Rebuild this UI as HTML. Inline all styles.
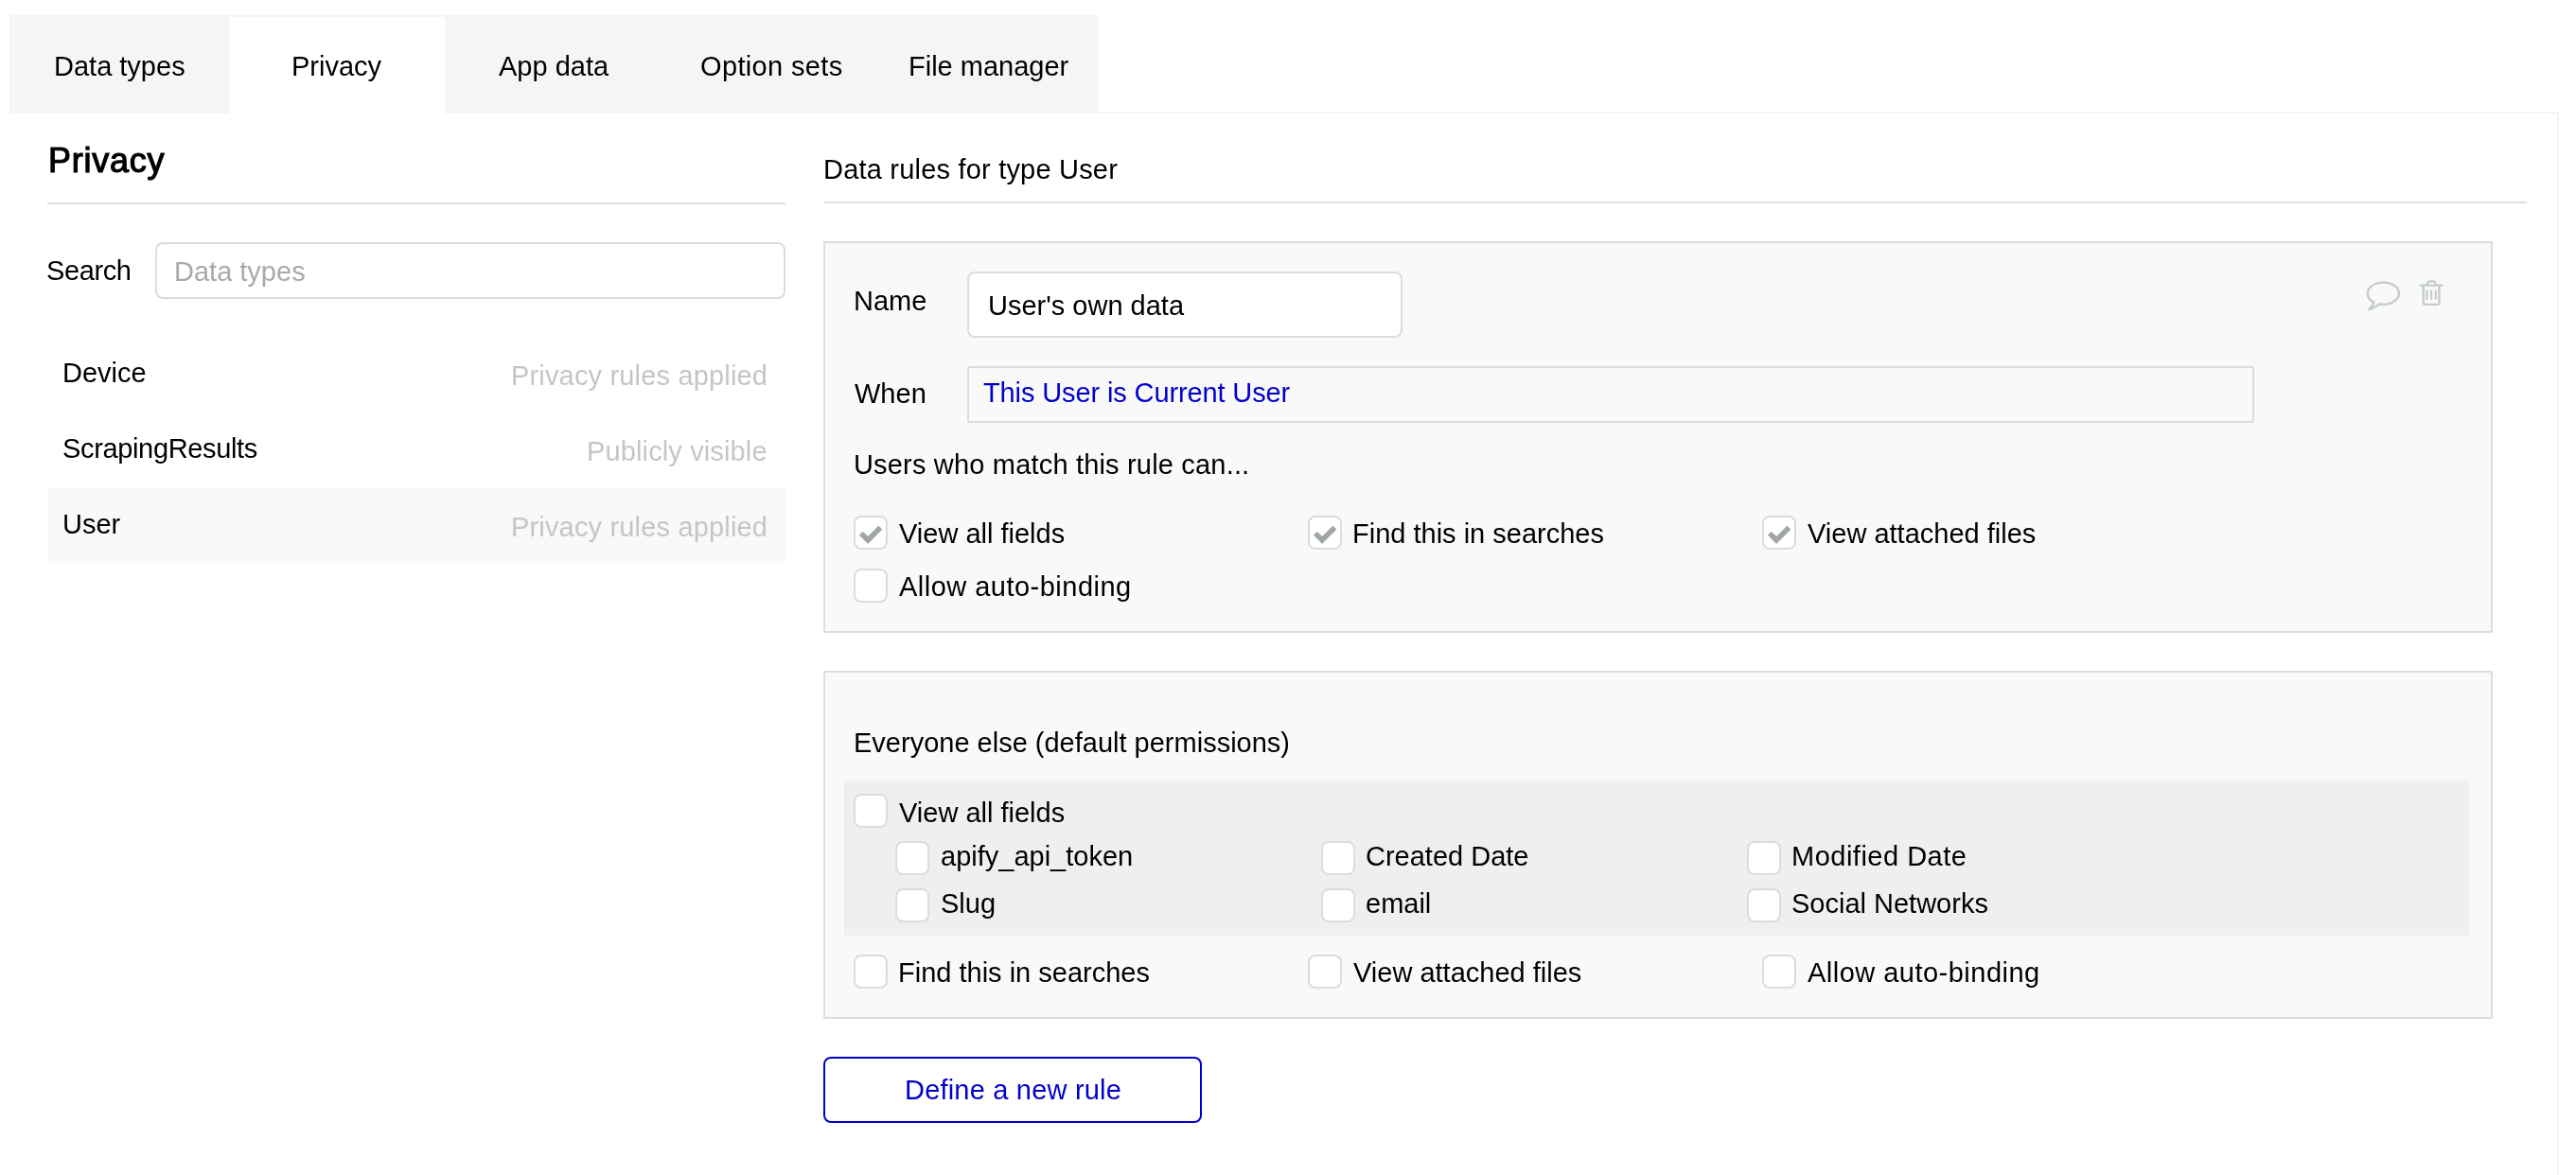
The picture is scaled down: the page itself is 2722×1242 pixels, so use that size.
<!DOCTYPE html>
<html>
<head>
<meta charset="utf-8">
<style>
html,body{margin:0;padding:0;}
body{width:2722px;height:1242px;overflow:hidden;background:#fff;position:relative;font-family:"Liberation Sans",sans-serif;color:#000;}
.a{position:absolute;}
.t{position:absolute;will-change:transform;font-size:29px;line-height:29px;white-space:nowrap;}
.tabbar{left:10px;top:16px;width:1150px;height:104px;background:#f5f5f5;}
.tab-active{left:242px;top:18px;width:228px;height:102px;background:#fff;}
.panel{left:1160px;top:118px;width:1542px;height:1200px;border-top:2px solid #f4f4f4;border-right:2px solid #f4f4f4;}
.hr{height:2px;background:#e0e0e0;}
.input{box-sizing:border-box;border:2px solid #dcdcdc;border-radius:8px;background:#fff;}
.box{box-sizing:border-box;border:2px solid #dddddd;background:#f9f9f9;}
.cb{box-sizing:border-box;width:36px;height:36px;border:2px solid #dcdcdc;border-radius:8px;background:#fff;}
.cb svg{position:absolute;left:-2px;top:-2px;}
.muted{color:#c5c5c5;}
.blue{color:#0000cc;}
</style>
</head>
<body>
<!-- tabs -->
<div class="a tabbar"></div>
<div class="a panel"></div>
<div class="a tab-active"></div>
<div class="t" id="t_dt" style="left:57px;top:56px;">Data types</div>
<div class="t" id="t_pr" style="left:308px;top:56px;">Privacy</div>
<div class="t" id="t_ad" style="left:527px;top:56px;">App data</div>
<div class="t" id="t_os" style="letter-spacing:0.35px;left:740px;top:56px;">Option sets</div>
<div class="t" id="t_fm" style="left:960px;top:56px;">File manager</div>

<!-- left column -->
<div class="t" id="h_priv" style="left:51px;top:152px;font-size:36px;line-height:36px;letter-spacing:0.75px;-webkit-text-stroke:1.2px #000;">Privacy</div>
<div class="a hr" style="left:50px;top:214px;width:780px;"></div>
<div class="t" id="search" style="letter-spacing:-0.4px;left:49px;top:272px;">Search</div>
<div class="a input" style="left:164px;top:256px;width:666px;height:60px;"></div>
<div class="t" id="ph" style="left:184px;top:273px;color:#a9a9a9;">Data types</div>

<div class="a" style="left:50px;top:516px;width:780px;height:80px;background:#f9f9f9;"></div>
<div class="t" id="dev" style="left:66px;top:380px;">Device</div>
<div class="t" id="scr" style="letter-spacing:-0.35px;left:66px;top:460px;">ScrapingResults</div>
<div class="t" id="usr" style="left:66px;top:540px;">User</div>
<div class="t muted" id="pra1" style="letter-spacing:0.17px;right:1911px;top:383px;">Privacy rules applied</div>
<div class="t muted" id="pv" style="letter-spacing:0.13px;right:1911px;top:463px;">Publicly visible</div>
<div class="t muted" id="pra2" style="letter-spacing:0.17px;right:1911px;top:543px;">Privacy rules applied</div>

<!-- right column -->
<div class="t" id="drt" style="letter-spacing:0.2px;left:870px;top:165px;">Data rules for type User</div>
<div class="a hr" style="left:870px;top:213px;width:1800px;"></div>

<!-- rule box 1 -->
<div class="a box" style="left:870px;top:255px;width:1764px;height:414px;"></div>
<div class="t" id="name" style="left:902px;top:304px;">Name</div>
<div class="a input" style="left:1022px;top:287px;width:460px;height:70px;"></div>
<div class="t" id="uod" style="left:1044px;top:309px;">User's own data</div>
<div class="t" id="when" style="left:903px;top:402px;">When</div>
<div class="a" style="box-sizing:border-box;left:1022px;top:387px;width:1360px;height:60px;border:2px solid #dcdcdc;border-radius:2px;background:#f9f9f9;"></div>
<div class="t blue" id="tuic" style="letter-spacing:-0.12px;left:1039px;top:401px;">This User is Current User</div>

<!-- icons -->
<svg class="a" style="left:2490px;top:285px;" width="110" height="50" viewBox="2490 285 110 50">
  <path d="M2508.6 319.6 A16.6 11.6 0 1 1 2514 321.4 C2511 323.8 2507.5 326.3 2503.2 327.3 C2505.5 325 2507.6 322 2508.6 319.3 Z" fill="none" stroke="#c4cccf" stroke-width="2.4" stroke-linejoin="round"/>
  <g fill="none" stroke="#c4cccf" stroke-width="2.3" stroke-linecap="round" stroke-linejoin="round">
    <path d="M2557.5 301.6 H2580.6"/>
    <path d="M2564.4 301.6 L2565.3 298.6 Q2565.7 297.4 2567 297.4 H2571.4 Q2572.7 297.4 2573.1 298.6 L2574 301.6"/>
    <path d="M2560.7 302.2 V320 Q2560.7 321.9 2562.6 321.9 H2575.6 Q2577.5 321.9 2577.5 320 V302.2"/>
    <path d="M2564.4 307.4 V316 M2569.1 307.4 V316 M2573.8 307.4 V316" stroke-width="2.2"/>
  </g>
</svg>

<div class="t" id="umr" style="letter-spacing:0.18px;left:902px;top:477px;">Users who match this rule can...</div>

<div class="a cb" style="left:902px;top:545px;"><svg width="36" height="36" viewBox="0 0 36 36"><path d="M9.6 17.6 L6.7 20.6 L15.1 29.2 L29.6 14.7 L26.4 11.5 L15.3 22.6 Z" fill="#a0a5a7" stroke="#a0a5a7" stroke-width="1.1" stroke-linejoin="round"/></svg></div>
<div class="t" id="vaf1" style="left:950px;top:550px;">View all fields</div>
<div class="a cb" style="left:1382px;top:545px;"><svg width="36" height="36" viewBox="0 0 36 36"><path d="M9.6 17.6 L6.7 20.6 L15.1 29.2 L29.6 14.7 L26.4 11.5 L15.3 22.6 Z" fill="#a0a5a7" stroke="#a0a5a7" stroke-width="1.1" stroke-linejoin="round"/></svg></div>
<div class="t" id="fis1" style="left:1429px;top:550px;">Find this in searches</div>
<div class="a cb" style="left:1862px;top:545px;"><svg width="36" height="36" viewBox="0 0 36 36"><path d="M9.6 17.6 L6.7 20.6 L15.1 29.2 L29.6 14.7 L26.4 11.5 L15.3 22.6 Z" fill="#a0a5a7" stroke="#a0a5a7" stroke-width="1.1" stroke-linejoin="round"/></svg></div>
<div class="t" id="vatf1" style="left:1910px;top:550px;">View attached files</div>
<div class="a cb" style="left:902px;top:601px;"></div>
<div class="t" id="aab1" style="letter-spacing:0.48px;left:950px;top:606px;">Allow auto-binding</div>

<!-- rule box 2 -->
<div class="a box" style="left:870px;top:709px;width:1764px;height:368px;"></div>
<div class="t" id="ee" style="left:902px;top:771px;">Everyone else (default permissions)</div>
<div class="a" style="left:892px;top:825px;width:1717px;height:164px;background:#efefef;"></div>
<div class="a cb" style="left:902px;top:839px;"></div>
<div class="t" id="vaf2" style="left:950px;top:845px;">View all fields</div>

<div class="a cb" style="left:946px;top:889px;width:36px;height:36px;"></div>
<div class="t" id="apify" style="left:994px;top:891px;">apify_api_token</div>
<div class="a cb" style="left:1396px;top:889px;width:36px;height:36px;"></div>
<div class="t" id="cd" style="left:1443px;top:891px;">Created Date</div>
<div class="a cb" style="left:1846px;top:889px;width:36px;height:36px;"></div>
<div class="t" id="md" style="letter-spacing:0.5px;left:1893px;top:891px;">Modified Date</div>

<div class="a cb" style="left:946px;top:939px;width:36px;height:36px;"></div>
<div class="t" id="slug" style="left:994px;top:941px;">Slug</div>
<div class="a cb" style="left:1396px;top:939px;width:36px;height:36px;"></div>
<div class="t" id="email" style="left:1443px;top:941px;">email</div>
<div class="a cb" style="left:1846px;top:939px;width:36px;height:36px;"></div>
<div class="t" id="sn" style="left:1893px;top:941px;">Social Networks</div>

<div class="a cb" style="left:902px;top:1009px;"></div>
<div class="t" id="fis2" style="left:949px;top:1014px;">Find this in searches</div>
<div class="a cb" style="left:1382px;top:1009px;"></div>
<div class="t" id="vatf2" style="left:1430px;top:1014px;">View attached files</div>
<div class="a cb" style="left:1862px;top:1009px;"></div>
<div class="t" id="aab2" style="letter-spacing:0.48px;left:1910px;top:1014px;">Allow auto-binding</div>

<!-- button -->
<div class="a" style="box-sizing:border-box;left:870px;top:1117px;width:400px;height:70px;border:2px solid #0000cc;border-radius:8px;background:#fff;"></div>
<div class="t blue" id="dnr" style="letter-spacing:0.2px;left:956px;top:1138px;">Define a new rule</div>
</body>
</html>
